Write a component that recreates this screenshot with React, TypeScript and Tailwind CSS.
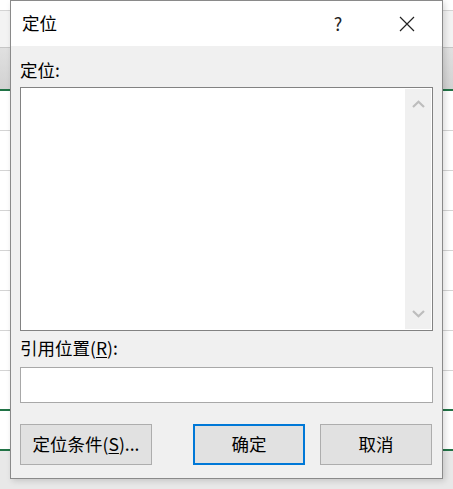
import React from 'react'

const font = { fontFamily: '"Noto Sans CJK SC", "Noto Sans", sans-serif' }

const rowLines = [130, 170, 210, 250, 290, 330, 370, 410, 450]
const colLines = [20, 123, 228, 332, 436]

const Sheet = () => {
  return (
    <div className="flex flex-col w-full h-full">
      <div className="h-[11px] bg-white border-b border-[#d4d4d4]" />
      <div className="h-[37px] bg-[#f3f3f3] border-b border-[#c6c6c6]" />
      <div className="h-[43px] bg-gradient-to-b from-[#e0e0e0] to-[#d2d2d2] border-b-2 border-[#217346]" />
      {rowLines.map((y, i) => (
        <div
          key={y}
          className={i === 7 || i === 8 ? 'h-[40px] bg-white border-b-2 border-[#217346] flex' : 'h-[40px] bg-white border-b border-[#d4d4d4] flex'}
        >
          {colLines.map((x, j) => (
            <div key={x} className={j === 0 ? 'w-[20px] border-r border-[#d4d4d4]' : 'w-[103px] border-r border-[#d4d4d4]'} />
          ))}
        </div>
      ))}
    </div>
  )
}

const Chevron = ({ up }: { up?: boolean }) => (
  <svg width="13" height="8" viewBox="0 0 13 8">
    <path d={up ? 'M1 7 L6.5 1.8 L12 7' : 'M1 1 L6.5 6.2 L12 1'} fill="none" stroke="#bdbdbd" strokeWidth="2.2" />
  </svg>
)

const Button = ({ children, focused }: { children: React.ReactNode, focused?: boolean }) => (
  <button
    className={
      focused
        ? 'h-[41px] w-full bg-[#e1e1e1] border-2 border-[#0078d7] text-[17.5px] text-black flex items-center justify-center'
        : 'h-[41px] w-full bg-[#e1e1e1] border border-[#adadad] text-[17.5px] text-black flex items-center justify-center'
    }
  >
    {children}
  </button>
)

export default function App () {
  return (
    <div className="relative w-[453px] h-[489px] overflow-hidden bg-[#e8e8e8]" style={font}>
      <Sheet />
      <div className="absolute left-[10px] top-0 w-[433px] h-[479px] border border-[#8a8a8a] flex flex-col shadow-[2px_2px_6px_rgba(0,0,0,0.15)]">
        <div className="h-[45px] bg-white flex items-center pl-[11px] shrink-0">
          <span className="text-[17.5px] text-black flex-1">定位</span>
          <span className="text-[18px] text-[#222] w-[20px] text-center mr-[51px]">?</span>
          <svg width="16" height="16" viewBox="0 0 16 16" className="mr-[27px]">
            <path d="M1 1 L15 15 M15 1 L1 15" stroke="#222" strokeWidth="1.2" />
          </svg>
        </div>
        <div className="flex-1 bg-[#f0f0f0] px-[9px] pt-[12px] flex flex-col">
          <div className="text-[17.5px] leading-[24px] text-black">定位:</div>
          <div className="mt-[5px] h-[244px] bg-white border border-[#828282] flex justify-end p-px">
            <div className="w-[26px] bg-[#f0f0f0] flex flex-col items-center justify-between py-[11px]">
              <Chevron up />
              <Chevron />
            </div>
          </div>
          <div className="mt-[5px] text-[17.5px] leading-[24px] text-black">
            引用位置(<span className="underline underline-offset-2">R</span>):
          </div>
          <div className="mt-[7px] h-[36px] bg-white border border-[#a8a8a8]" />
          <div className="mt-[21px] flex items-center">
            <div className="w-[132px]">
              <Button>
                定位条件(<span className="underline underline-offset-2">S</span>)...
              </Button>
            </div>
            <div className="ml-[41px] w-[112px]">
              <Button focused>确定</Button>
            </div>
            <div className="ml-[15px] w-[112px]">
              <Button>取消</Button>
            </div>
          </div>
        </div>
      </div>
    </div>
  )
}
